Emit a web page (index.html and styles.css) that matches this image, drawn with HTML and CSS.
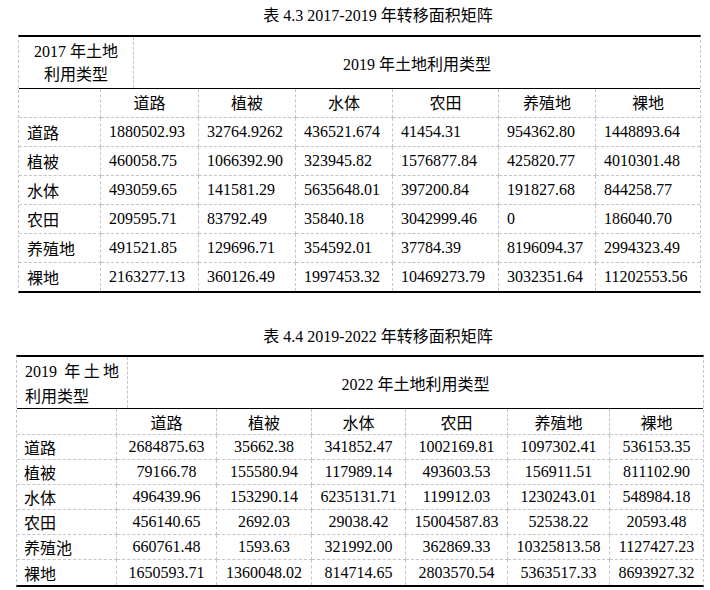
FILE: index.html
```html
<!DOCTYPE html>
<html lang="zh">
<head>
<meta charset="utf-8">
<title>转移面积矩阵</title>
<link rel="stylesheet" href="styles.css">
</head>
<body>
<div class="page">
  <div class="caption cap1">表 4.3 2017-2019 年转移面积矩阵</div>
  <div class="mat m1">
    <div class="head">
      <div class="corner"><span>2017 年土地</span><span>利用类型</span></div>
      <div class="span">2019 年土地利用类型</div>
    </div>
    <div class="grid">
      <div class="c ch"></div><div class="c ch">道路</div><div class="c ch">植被</div><div class="c ch">水体</div><div class="c ch">农田</div><div class="c ch">养殖地</div><div class="c ch">裸地</div>
      <div class="c rl">道路</div><div class="c">1880502.93</div><div class="c">32764.9262</div><div class="c">436521.674</div><div class="c">41454.31</div><div class="c">954362.80</div><div class="c">1448893.64</div>
      <div class="c rl">植被</div><div class="c">460058.75</div><div class="c">1066392.90</div><div class="c">323945.82</div><div class="c">1576877.84</div><div class="c">425820.77</div><div class="c">4010301.48</div>
      <div class="c rl">水体</div><div class="c">493059.65</div><div class="c">141581.29</div><div class="c">5635648.01</div><div class="c">397200.84</div><div class="c">191827.68</div><div class="c">844258.77</div>
      <div class="c rl">农田</div><div class="c">209595.71</div><div class="c">83792.49</div><div class="c">35840.18</div><div class="c">3042999.46</div><div class="c">0</div><div class="c">186040.70</div>
      <div class="c rl">养殖地</div><div class="c">491521.85</div><div class="c">129696.71</div><div class="c">354592.01</div><div class="c">37784.39</div><div class="c">8196094.37</div><div class="c">2994323.49</div>
      <div class="c rl">裸地</div><div class="c">2163277.13</div><div class="c">360126.49</div><div class="c">1997453.32</div><div class="c">10469273.79</div><div class="c">3032351.64</div><div class="c">11202553.56</div>
    </div>
  </div>

  <div class="caption cap2">表 4.4 2019-2022 年转移面积矩阵</div>
  <div class="mat m2">
    <div class="head">
      <div class="corner"><span class="just">2019 年土地</span><span>利用类型</span></div>
      <div class="span">2022 年土地利用类型</div>
    </div>
    <div class="grid">
      <div class="c ch"></div><div class="c ch">道路</div><div class="c ch">植被</div><div class="c ch">水体</div><div class="c ch">农田</div><div class="c ch">养殖地</div><div class="c ch">裸地</div>
      <div class="c rl">道路</div><div class="c">2684875.63</div><div class="c">35662.38</div><div class="c">341852.47</div><div class="c">1002169.81</div><div class="c">1097302.41</div><div class="c">536153.35</div>
      <div class="c rl">植被</div><div class="c">79166.78</div><div class="c">155580.94</div><div class="c">117989.14</div><div class="c">493603.53</div><div class="c">156911.51</div><div class="c">811102.90</div>
      <div class="c rl">水体</div><div class="c">496439.96</div><div class="c">153290.14</div><div class="c">6235131.71</div><div class="c">119912.03</div><div class="c">1230243.01</div><div class="c">548984.18</div>
      <div class="c rl">农田</div><div class="c">456140.65</div><div class="c">2692.03</div><div class="c">29038.42</div><div class="c">15004587.83</div><div class="c">52538.22</div><div class="c">20593.48</div>
      <div class="c rl">养殖池</div><div class="c">660761.48</div><div class="c">1593.63</div><div class="c">321992.00</div><div class="c">362869.33</div><div class="c">10325813.58</div><div class="c">1127427.23</div>
      <div class="c rl">裸地</div><div class="c">1650593.71</div><div class="c">1360048.02</div><div class="c">814714.65</div><div class="c">2803570.54</div><div class="c">5363517.33</div><div class="c">8693927.32</div>
    </div>
  </div>
</div>
</body>
</html>
```

FILE: styles.css
```css
* { box-sizing: border-box; }

html, body {
  margin: 0;
  background: #fff;
}

body {
  font-family: "Liberation Serif", "Noto Sans CJK SC", serif;
  font-size: 16px;
  color: #000;
}

.page {
  padding-top: 6px;
}

.caption {
  height: 20px;
  line-height: 20px;
  text-align: center;
  padding-left: 46px;
  white-space: nowrap;
}

.cap1 { margin-bottom: 9px; }
.cap2 { margin-top: 34px; margin-bottom: 8px; }

.mat {
  border-top: 2px solid #000;
  border-bottom: 2px solid #000;
  border-left: 1px dashed #c4c4c4;
  border-right: 1px dashed #c4c4c4;
}

.m1 { margin-left: 18px; width: 683px; }
.m2 { margin-left: 16px; width: 688px; }

.head {
  display: flex;
  height: 52px;
  border-bottom: 1px solid #000;
}

.corner {
  display: flex;
  flex-direction: column;
  justify-content: center;
  border-right: 1px dashed #c4c4c4;
  white-space: nowrap;
}

.m1 .corner {
  width: 115px;
  align-items: center;
  line-height: 23px;
  padding-top: 1px;
}

.m2 .corner {
  width: 111px;
  padding: 2px 8px 0 8px;
  line-height: 25px;
}

.m2 .corner span { display: block; }
.m2 .corner .just {
  text-align: justify;
  text-align-last: justify;
}

.span {
  flex: 1;
  display: flex;
  align-items: center;
  justify-content: center;
}

.grid {
  display: grid;
}

.m1 .grid {
  grid-template-columns: 82px 98px 97px 97px 106px 97px 104px;
  grid-template-rows: 29px repeat(5, 29px) 28px;
}

.m2 .grid {
  grid-template-columns: 100px 100px 95px 94px 102px 102px 93px;
  grid-template-rows: 26px repeat(6, 25px);
}

.c {
  display: flex;
  align-items: center;
  padding-left: 8px;
  white-space: nowrap;
  border-right: 1px dashed #c4c4c4;
  border-bottom: 1px dashed #c4c4c4;
}

.c:nth-child(7n) { border-right: none; }
.c:nth-last-child(-n+7) { border-bottom: none; }

.ch {
  justify-content: center;
  padding-left: 0;
}

.m1 .ch {
  padding-bottom: 3px;
}

.m2 .c {
  justify-content: center;
  padding-left: 0;
}

.m2 .c.rl {
  justify-content: flex-start;
  padding-left: 7px;
}
```
